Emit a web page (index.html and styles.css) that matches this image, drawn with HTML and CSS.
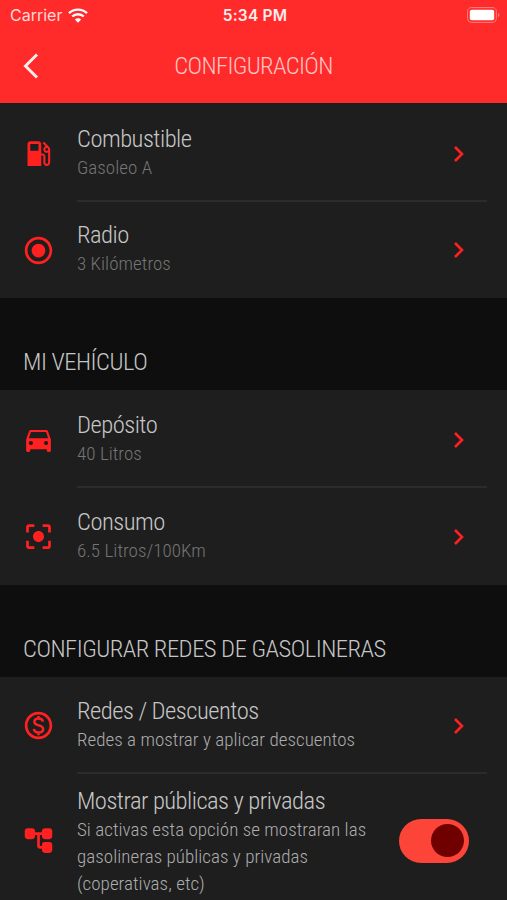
FILE: index.html
```html
<!DOCTYPE html>
<html lang="es">
<head>
  <meta charset="UTF-8">
  <meta name="viewport" content="width=device-width, initial-scale=1.0">
  <title>Configuración</title>
  <link rel="stylesheet" href="styles.css">
</head>
<body>
  <div class="app">
    <header class="topbar">
      <div class="status">
        <div class="carrier">
          <span>Carrier</span>
          <svg class="wifi" viewBox="0 0 20 15">
            <path d="M1 5.2a13 13 0 0 1 18 0" />
            <path d="M4.2 8.5a8.4 8.4 0 0 1 11.6 0" />
            <path class="dot" d="M10 14.8 6.9 11.6a4.4 4.4 0 0 1 6.2 0z" />
          </svg>
        </div>
        <span class="time">5:34 PM</span>
        <svg class="battery" viewBox="0 0 33 16">
          <rect class="shell" x=".6" y=".6" width="28.8" height="14.8" rx="4" />
          <rect class="charge" x="2.8" y="2.8" width="24.4" height="10.4" rx="2" />
          <path class="tip" d="M31 5.8c1.800.8 1.800 3.600 0 4.400z" />
        </svg>
      </div>
      <div class="navbar">
        <svg class="back" viewBox="0 0 16 26"><path d="M14 1.500 2.500 13 14 24.500" /></svg>
        <h1>CONFIGURACIÓN</h1>
      </div>
    </header>

    <ul class="list first">
      <li class="row">
        <svg class="icon" viewBox="0 0 24 24"><path d="M19.770 7.230l.010-.010-3.720-3.720L15 4.560l2.110 2.110c-.94.36-1.610 1.260-1.610 2.330 0 1.380 1.120 2.500 2.500 2.500.36 0 .69-.08 1-.21v7.210c0 .55-.45 1-1 1s-1-.45-1-1V14c0-1.100-.9-2-2-2h-1V5c0-1.100-.9-2-2-2H6c-1.100 0-2 .9-2 2v16h10v-7.500h1.500v5c0 1.380 1.120 2.500 2.500 2.500s2.500-1.120 2.500-2.500V9c0-.69-.28-1.320-.73-1.770zM12 10H6V5h6v5zm6 0c-.55 0-1-.45-1-1s.45-1 1-1 1 .45 1 1-.45 1-1 1z" /></svg>
        <div class="body">
          <div class="text"><h3>Combustible</h3><p>Gasoleo A</p></div>
          <svg class="chevron" viewBox="0 0 12 18"><path d="M2 2l7 7-7 7" /></svg>
        </div>
      </li>
      <li class="row">
        <svg class="icon" viewBox="0 0 24 24"><path d="M12 7c-2.760 0-5 2.240-5 5s2.240 5 5 5 5-2.240 5-5-2.240-5-5-5zm0-5C6.480 2 2 6.480 2 12s4.480 10 10 10 10-4.480 10-10S17.520 2 12 2zm0 18c-4.420 0-8-3.580-8-8s3.580-8 8-8 8 3.580 8 8-3.580 8-8 8z" /></svg>
        <div class="body">
          <div class="text"><h3>Radio</h3><p>3 Kilómetros</p></div>
          <svg class="chevron" viewBox="0 0 12 18"><path d="M2 2l7 7-7 7" /></svg>
        </div>
      </li>
    </ul>

    <h2>MI VEHÍCULO</h2>
    <ul class="list">
      <li class="row">
        <svg class="icon" viewBox="0 0 24 24"><path d="M18.920 6.010C18.720 5.420 18.160 5 17.500 5h-11c-.66 0-1.210.42-1.420 1.010L3 12v8c0 .55.45 1 1 1h1c.55 0 1-.45 1-1v-1h12v1c0 .55.45 1 1 1h1c.55 0 1-.45 1-1v-8l-2.080-5.990zM6.500 16c-.83 0-1.500-.67-1.500-1.500S5.670 13 6.500 13s1.500.67 1.500 1.500S7.330 16 6.500 16zm11 0c-.83 0-1.500-.67-1.500-1.500s.67-1.500 1.500-1.500 1.500.67 1.500 1.500-.67 1.500-1.500 1.500zM5 11l1.500-4.500h11L19 11H5z" /></svg>
        <div class="body">
          <div class="text"><h3>Depósito</h3><p>40 Litros</p></div>
          <svg class="chevron" viewBox="0 0 12 18"><path d="M2 2l7 7-7 7" /></svg>
        </div>
      </li>
      <li class="row">
        <svg class="icon" viewBox="0 0 24 24"><path d="M5 15H3v4c0 1.100.9 2 2 2h4v-2H5v-4zM5 5h4V3H5c-1.100 0-2 .9-2 2v4h2V5zm14-2h-4v2h4v4h2V5c0-1.100-.9-2-2-2zm0 16h-4v2h4c1.100 0 2-.9 2-2v-4h-2v4zM12 8c-2.210 0-4 1.790-4 4s1.790 4 4 4 4-1.790 4-4-1.790-4-4-4z" /></svg>
        <div class="body">
          <div class="text"><h3>Consumo</h3><p>6.5 Litros/100Km</p></div>
          <svg class="chevron" viewBox="0 0 12 18"><path d="M2 2l7 7-7 7" /></svg>
        </div>
      </li>
    </ul>

    <h2>CONFIGURAR REDES DE GASOLINERAS</h2>
    <ul class="list last">
      <li class="row">
        <svg class="icon" viewBox="0 0 24 24"><path d="M12 2C6.480 2 2 6.480 2 12s4.480 10 10 10 10-4.480 10-10S17.520 2 12 2zm0 18c-4.410 0-8-3.590-8-8s3.590-8 8-8 8 3.590 8 8-3.590 8-8 8z" /><path class="dollar" d="M15.200 9.200C15 7.700 13.800 6.900 12 6.900S9 7.800 9 9.300c0 3.500 6.400 1.800 6.400 5.200 0 1.600-1.400 2.600-3.300 2.600-2 0-3.300-.9-3.500-2.600M12 5v2M12 17v2" /></svg>
        <div class="body">
          <div class="text bright"><h3>Redes / Descuentos</h3><p>Redes a mostrar y aplicar descuentos</p></div>
          <svg class="chevron" viewBox="0 0 12 18"><path d="M2 2l7 7-7 7" /></svg>
        </div>
      </li>
      <li class="row tall">
        <svg class="icon" viewBox="0 0 24 24">
          <rect x="2" y="3" width="7.500" height="8" rx="2.200" />
          <rect x="14.500" y="3" width="7.500" height="8" rx="2.200" />
          <rect x="14.500" y="13" width="7.500" height="8" rx="2.200" />
          <path d="M8 6h8v2h-3v7.500c0 .3.200.5.500.5H16v2h-3c-1.100 0-2-.9-2-2V8H8z" />
        </svg>
        <div class="body">
          <div class="text bright"><h3>Mostrar públicas y privadas</h3><p>Si activas esta opción se mostraran las gasolineras públicas y privadas (coperativas, etc)</p></div>
          <span class="switch"><span class="knob"></span></span>
        </div>
      </li>
    </ul>
  </div>
</body>
</html>
```
FILE: styles.css
```css
* { box-sizing: border-box; margin: 0; padding: 0; }
body {
  background: #0e0e0e;
  color: #c6c6c6;
  font-family: 'Roboto Condensed', Roboto, sans-serif;
  font-stretch: 75%;
  font-weight: 300;
  height: 900px;
  overflow: hidden;
}
.topbar {
  background: #ff2a2a;
  color: #fff;
  height: 103px;
}
.status {
  display: grid;
  grid-template-columns: 1fr auto 1fr;
  align-items: center;
  height: 30px;
  padding: 0 7px 0 10px;
  font-family: Inter, sans-serif;
  font-stretch: normal;
  font-size: 16px;
  font-weight: 400;
}
.carrier {
  display: flex;
  align-items: center;
  gap: 6px;
  color: #ffd9d9;
}
.wifi { width: 20px; height: 15px; fill: none; stroke: #fff; stroke-width: 2.4; }
.wifi .dot { fill: #fff; stroke: none; }
.time { font-size: 15.5px; font-weight: 600; letter-spacing: 0.2px; color: #ffecec; }
.battery { width: 33px; height: 16px; justify-self: end; }
.shell { fill: none; stroke: #ff8080; stroke-width: 1; }
.charge { fill: #fff; }
.tip { fill: #ff8080; }
.navbar {
  display: grid;
  grid-template-columns: 60px 1fr 60px;
  align-items: center;
  height: 72px;
}
.back {
  width: 16px;
  height: 26px;
  margin-left: 23px;
  fill: none;
  stroke: #ffecec;
  stroke-width: 3;
}
h1 {
  padding-bottom: 2px;
  font-size: 24.6px;
  font-weight: 300;
  letter-spacing: -0.65px;
  text-align: center;
  color: #ffc4c4;
}
h2 {
  display: flex;
  align-items: flex-end;
  height: 92px;
  padding: 0 23px 13px;
  font-size: 24.6px;
  line-height: 30px;
  font-weight: 300;
  letter-spacing: -0.5px;
}
.list {
  list-style: none;
  padding-top: 1px;
  background: #1e1e1e;
}
.list.first { padding-top: 2px; }
.list.last { padding-top: 0; }
.row {
  display: flex;
  align-items: center;
  height: 97px;
  padding: 0 20px 0 22px;
}
.first .row:last-child { height: 96px; }
.icon {
  flex: none;
  width: 33px;
  height: 33px;
  margin-right: 22px;
  fill: #ff2020;
}
.dollar { fill: none; stroke: #ff2020; stroke-width: 1.8; }
.body {
  flex: 1;
  display: flex;
  align-items: center;
  justify-content: space-between;
  height: 100%;
  box-shadow: inset 0 -2px #2b2b2b;
}
.row:last-child .body { box-shadow: none; }
.text { padding-bottom: 3px; }
h3 {
  font-size: 24.6px;
  line-height: 30px;
  font-weight: 300;
  letter-spacing: -0.53px;
}
.text p {
  font-size: 19px;
  line-height: 27px;
  letter-spacing: 0.04px;
  color: #757575;
}
.text.bright p { color: #adadad; }
.chevron {
  width: 12px;
  height: 18px;
  margin-right: 22px;
  fill: none;
  stroke: #ff2020;
  stroke-width: 2.6;
}
.tall { height: 133px; }
.tall .text { width: 310px; padding: 1px 0 0; }
.switch {
  flex: none;
  width: 70px;
  height: 44px;
  margin-right: 18px;
  padding: 5px;
  border-radius: 22px;
  background: #fd4438;
}
.knob {
  display: block;
  width: 33px;
  height: 33px;
  margin-left: auto;
  border-radius: 50%;
  background: #700000;
}
```
